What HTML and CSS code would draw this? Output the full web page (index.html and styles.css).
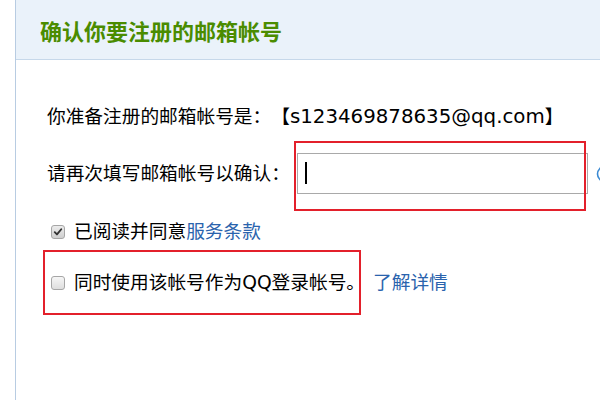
FILE: index.html
```html
<!DOCTYPE html>
<html lang="zh-CN">
<head>
<meta charset="utf-8">
<title>确认你要注册的邮箱帐号</title>
<link rel="stylesheet" href="styles.css">
</head>
<body>
<div class="page">
  <div class="header">
    <h1 class="title">确认你要注册的邮箱帐号</h1>
  </div>
  <div class="content">
    <div class="row-email">你准备注册的邮箱帐号是：【<span class="email">s123469878635@qq.com</span>】</div>
    <div class="row-input">
      <label class="label" for="confirm">请再次填写邮箱帐号以确认：</label>
      <span class="field">
        <input id="confirm" class="input" type="text">
        <span class="caret"></span>
      </span>
      <svg class="help" width="18" height="18" viewBox="0 0 18 18"><circle cx="9" cy="9" r="7.5" fill="none" stroke="#3b8ad3" stroke-width="1.6"/></svg>
    </div>
    <label class="check agree">
      <input class="cb" type="checkbox" checked>
      <span class="box checked"><svg width="14" height="14" viewBox="0 0 14 14"><path d="M3.2 7.2 L5.8 9.8 L10.8 3.8" fill="none" stroke="#333" stroke-width="2.2" stroke-linecap="round" stroke-linejoin="round"/></svg></span>
      <span>已阅读并同意<a class="link" href="#">服务条款</a></span>
    </label>
    <label class="check qq">
      <input class="cb" type="checkbox">
      <span class="box"></span>
      <span>同时使用该帐号作为QQ登录帐号。</span><a class="link more" href="#">了解详情</a>
    </label>
  </div>
  <div class="mark mark-input"></div>
  <div class="mark mark-qq"></div>
</div>
</body>
</html>
```
FILE: styles.css
```css
html, body {
  margin: 0;
  padding: 0;
  background: #fff;
}
body {
  width: 600px;
  height: 400px;
  overflow: hidden;
  font-family: "DejaVu Sans", "Noto Sans CJK SC", sans-serif;
  font-size: 18.7px;
  color: #000;
  text-spacing-trim: space-all;
}
.page {
  position: relative;
  margin-left: 15px;
  border-left: 1px solid #b8cce2;
  height: 400px;
}
.header {
  height: 59px;
  background: #eaf2fa;
  border-bottom: 1px solid #c6d8ea;
  display: flex;
  align-items: center;
  padding-left: 24px;
}
.title {
  margin: 0;
  font-family: "Noto Sans CJK SC", sans-serif;
  font-weight: bold;
  font-size: 22px;
  line-height: 26px;
  color: #4a8c00;
}
.content {
  padding: 44px 0 0 31px;
}
.row-email {
  line-height: 26px;
  white-space: nowrap;
}
.email {
  font-size: 19.8px;
}
.row-input {
  display: flex;
  align-items: center;
  margin-top: 23px;
  white-space: nowrap;
}
.label {
  flex: none;
  line-height: 26px;
  margin-right: 7px;
}
.field {
  position: relative;
  flex: none;
  display: block;
  width: 291px;
  height: 41px;
}
.input {
  box-sizing: border-box;
  width: 291px;
  height: 41px;
  margin: 0;
  border: 1px solid #a9a9a9;
  outline: none;
  padding: 0 8px;
  font: inherit;
  background: #fff;
  caret-color: transparent;
}
.caret {
  position: absolute;
  left: 8px;
  top: 9px;
  width: 2px;
  height: 22px;
  background: #000;
}
.help {
  flex: none;
  margin-left: 8px;
}
.check {
  display: flex;
  align-items: center;
  line-height: 26px;
  white-space: nowrap;
  margin-top: 25px;
}
.cb {
  display: none;
}
.box {
  flex: none;
  box-sizing: border-box;
  width: 14px;
  height: 14px;
  margin: 0 9px 0 4px;
  border: 1px solid #a6a6a6;
  border-radius: 3px;
  background: linear-gradient(#f6f6f6, #dedede);
  display: flex;
  align-items: center;
  justify-content: center;
}
.box svg {
  display: block;
}
.box.checked {
  background: linear-gradient(#ececec, #cfcfcf);
}
.link {
  color: #2a63ad;
  text-decoration: none;
}
.more {
  margin-left: 8px;
}
.mark {
  position: absolute;
  box-sizing: border-box;
  border: 2px solid #e3202b;
}
.mark-input {
  left: 278px;
  top: 141px;
  width: 292px;
  height: 70px;
}
.mark-qq {
  left: 27px;
  top: 250px;
  width: 318px;
  height: 65px;
}
```
